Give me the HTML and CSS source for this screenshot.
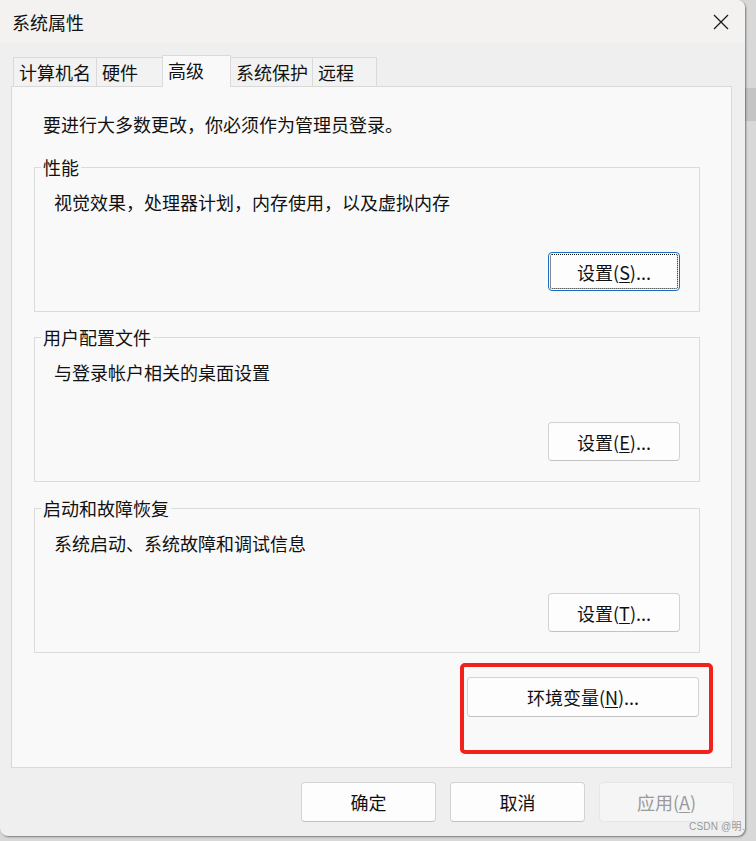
FILE: index.html
```html
<!DOCTYPE html>
<html lang="zh-CN">
<head>
<meta charset="utf-8">
<title>系统属性</title>
<link rel="stylesheet" href="styles.css">
</head>
<body>
<div class="window">
  <div class="titlebar">
    <span class="title">系统属性</span>
    <svg class="close" width="16" height="16" viewBox="0 0 16 16"><path d="M1 1 L15 15 M15 1 L1 15" stroke="#1b1b1b" stroke-width="1.3" fill="none"/></svg>
  </div>
  <div class="tabs">
    <div class="tab t1">计算机名</div>
    <div class="tab t2">硬件</div>
    <div class="tab t3 active">高级</div>
    <div class="tab t4">系统保护</div>
    <div class="tab t5">远程</div>
  </div>
  <div class="panel">
    <div class="intro">要进行大多数更改，你必须作为管理员登录。</div>
    <div class="group g1">
      <div class="legend">性能</div>
      <div class="desc">视觉效果，处理器计划，内存使用，以及虚拟内存</div>
      <div class="btnrow"><div class="btn focused"><span class="focusring">设置(<u>S</u>)...</span></div></div>
    </div>
    <div class="group g2">
      <div class="legend">用户配置文件</div>
      <div class="desc">与登录帐户相关的桌面设置</div>
      <div class="btnrow"><div class="btn">设置(<u>E</u>)...</div></div>
    </div>
    <div class="group g3">
      <div class="legend">启动和故障恢复</div>
      <div class="desc">系统启动、系统故障和调试信息</div>
      <div class="btnrow"><div class="btn">设置(<u>T</u>)...</div></div>
    </div>
    <div class="btn envbtn">环境变量(<u>N</u>)...</div>
  </div>
  <div class="footer">
    <div class="btn fbtn">确定</div>
    <div class="btn fbtn">取消</div>
    <div class="btn fbtn disabled">应用(<u>A</u>)</div>
  </div>
</div>
<div class="redbox"></div>
<div class="watermark">CSDN @明.</div>
</body>
</html>
```
FILE: styles.css
```css
html, body {
  margin: 0;
  padding: 0;
}
body {
  width: 756px;
  height: 841px;
  overflow: hidden;
  position: relative;
  background: linear-gradient(to bottom, #d8d8d8 0, #d8d8d8 88px, #c4c4c4 88px, #c4c4c4 121px, #d8d8d8 121px, #d8d8d8 100%);
  font-family: "Noto Sans CJK SC", "Microsoft YaHei", sans-serif;
  font-size: 18px;
  color: #111;
}
.window {
  width: 745px;
  height: 836px;
  background: #efefef;
  border-radius: 0 8px 8px 8px;
  box-shadow: 1px 1px 2px rgba(0,0,0,0.45);
  display: flex;
  flex-direction: column;
  overflow: hidden;
}
.titlebar {
  height: 43px;
  flex: none;
  background: #f3f2f0;
  display: flex;
  align-items: center;
  justify-content: space-between;
  padding: 0 16px 0 12px;
}
.title {
  line-height: 24px;
  font-size: 18px;
}
.close {
  display: block;
}
.tabs {
  display: flex;
  align-items: flex-end;
  margin-top: 12px;
  padding-left: 13px;
  height: 31px;
  flex: none;
}
.tab {
  height: 29px;
  box-sizing: border-box;
  border: 1px solid #dadada;
  border-bottom: none;
  background: #f2f2f2;
  padding-left: 5px;
  line-height: 28px;
  margin-right: -1px;
}
.t1 { width: 84px; }
.t2 { width: 67px; }
.t3 { width: 69px; }
.t4 { width: 83px; }
.t5 { width: 65px; }
.tab.active {
  height: 32px;
  margin-bottom: -1px;
  background: #f9f9f9;
  position: relative;
  z-index: 1;
  line-height: 29px;
}
.panel {
  margin-left: 11px;
  width: 721px;
  box-sizing: border-box;
  border: 1px solid #d9d9d9;
  background: #f9f9f9;
  padding: 25px 0 50px 0;
  display: flex;
  flex-direction: column;
  flex: none;
}
.intro {
  line-height: 24px;
  padding-left: 31px;
}
.group {
  margin-left: 22px;
  width: 666px;
  box-sizing: border-box;
  border: 1px solid #dbdbdb;
  padding: 0 19px 20px 0;
  display: flex;
  flex-direction: column;
  align-items: flex-start;
}
.g1 { margin-top: 31px; }
.g2 { margin-top: 25px; }
.g3 { margin-top: 26px; }
.legend {
  margin: -13px 0 0 6px;
  padding: 0 2px;
  background: #f9f9f9;
  line-height: 24px;
}
.desc {
  margin-top: 11px;
  padding-left: 19px;
  line-height: 24px;
}
.btnrow {
  align-self: stretch;
  display: flex;
  justify-content: flex-end;
  margin-top: 38px;
}
.btn {
  box-sizing: border-box;
  height: 39px;
  width: 132px;
  background: #fdfdfd;
  border: 1px solid #d3d3d3;
  border-bottom-color: #c2c2c2;
  border-radius: 4px;
  display: flex;
  align-items: center;
  justify-content: center;
  line-height: 24px;
  color: #111;
}
.btn u {
  text-decoration-thickness: 1px;
  text-underline-offset: 2px;
}
.btn.focused {
  border: 1px solid #1a6fc4;
  padding: 1px;
}
.focusring {
  flex: 1;
  align-self: stretch;
  border: 1px dotted #111;
  border-radius: 2px;
  display: flex;
  align-items: center;
  justify-content: center;
}
.envbtn {
  width: 232px;
  height: 40px;
  align-self: flex-end;
  margin-right: 32px;
  margin-top: 24px;
}
.footer {
  display: flex;
  justify-content: flex-end;
  gap: 14px;
  padding-right: 11px;
  margin-top: 14px;
}
.fbtn {
  width: 135px;
  height: 40px;
}
.fbtn.disabled {
  background: #f5f5f5;
  border-color: #e6e6e6;
  color: #9a9a9a;
}
.redbox {
  position: absolute;
  left: 460px;
  top: 663px;
  width: 253px;
  height: 91px;
  box-sizing: border-box;
  border: 4px solid #f2211b;
  border-radius: 5px;
}
.watermark {
  position: absolute;
  left: 689px;
  top: 820px;
  font-family: "Liberation Sans", "Noto Sans CJK SC", sans-serif;
  font-size: 10px;
  line-height: 14px;
  color: rgba(120,120,120,0.75);
  letter-spacing: 0.2px;
  white-space: nowrap;
}
```
